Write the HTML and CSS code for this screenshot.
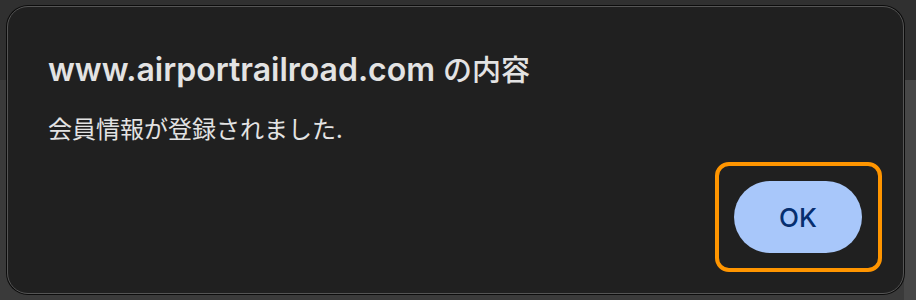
FILE: index.html
```html
<!DOCTYPE html>
<html lang="ja">
<head>
<meta charset="utf-8">
<link rel="stylesheet" href="styles.css">
</head>
<body>
<div class="dialog" role="alertdialog">
  <h1 class="title">www.airportrailroad.com <span class="title-cjk">の内容</span></h1>
  <p class="message">会員情報が登録されました.</p>
  <div class="actions">
    <div class="focus-ring">
      <button class="ok">OK</button>
    </div>
  </div>
</div>
</body>
</html>
```
FILE: styles.css
```css
html, body {
  margin: 0;
  height: 100%;
}
body {
  width: 916px;
  height: 300px;
  box-sizing: border-box;
  padding: 6px 12px 0 7px;
  overflow: hidden;
  background:
    linear-gradient(to right, transparent 0 904px, #474747 904px) 0 80px / 100% 100% no-repeat,
    linear-gradient(to bottom, #303030 0 80px, #3a3a3a 80px);
  font-family: Inter, "Noto Sans CJK JP", sans-serif;
}
.dialog {
  box-sizing: border-box;
  width: 897px;
  height: 288px;
  background: #202020;
  border: 1px solid #555555;
  box-shadow: 0 0 0 1px #0c0c0c;
  border-radius: 21px;
  padding: 0 21px 21px 40px;
  display: flex;
  flex-direction: column;
  color: #e3e3e3;
}
.title {
  margin: 43px 0 0;
  font-size: 32px;
  line-height: 40px;
  font-weight: 600;
  letter-spacing: 0;
}
.title-cjk {
  font-size: 29px;
  font-weight: 500;
}
.message {
  margin: 21px 0 0;
  font-size: 24px;
  line-height: 32px;
  font-family: "Noto Sans CJK JP", sans-serif;
}
.actions {
  margin-top: auto;
  display: flex;
  justify-content: flex-end;
}
.focus-ring {
  border: 4px solid #ff9500;
  border-radius: 14px;
  padding: 15px 16px 15px 15px;
  display: flex;
}
.ok {
  width: 128px;
  height: 72px;
  border: none;
  border-radius: 36px;
  background: #a8c7fa;
  color: #062e6f;
  font-family: Inter, sans-serif;
  font-size: 26px;
  font-weight: 500;
  padding: 0;
}
```
